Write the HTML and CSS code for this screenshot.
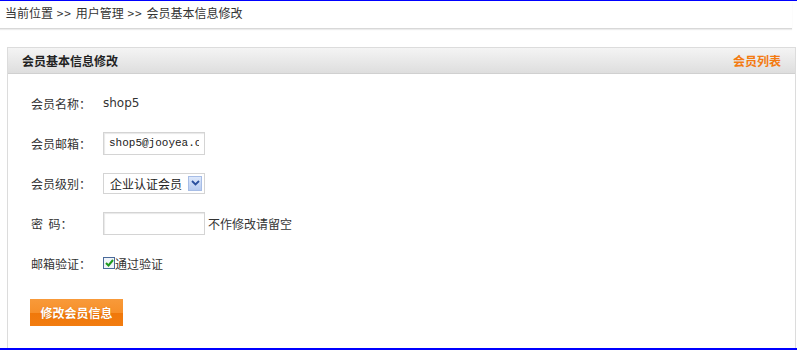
FILE: index.html
```html
<!DOCTYPE html>
<html lang="zh-CN">
<head>
    <meta charset="UTF-8">
    <title>会员基本信息修改</title>
    <link rel="stylesheet" href="styles.css">
</head>
<body>
    <div class="crumbs">当前位置 <span class="sep">&gt;&gt;</span> 用户管理 <span class="sep">&gt;&gt;</span> 会员基本信息修改</div>

    <div class="panel">
        <div class="panel-head">
            <span class="panel-title">会员基本信息修改</span>
            <a class="panel-link" href="#">会员列表</a>
        </div>
        <div class="form">
            <div class="row">
                <span class="label">会员名称：</span>
                <span class="value">shop5</span>
            </div>
            <div class="row">
                <span class="label">会员邮箱：</span>
                <input class="text mono" type="text" value="shop5@jooyea.com">
            </div>
            <div class="row">
                <span class="label">会员级别：</span>
                <div class="select">
                    <span class="select-text">企业认证会员</span>
                    <span class="select-arrow">
                        <svg width="9" height="6" viewBox="0 0 9 6"><path d="M1 1 L4.5 4.5 L8 1" fill="none" stroke="#2a4f9e" stroke-width="1.8"/></svg>
                    </span>
                </div>
            </div>
            <div class="row">
                <span class="label">密&nbsp;&nbsp;码：</span>
                <input class="text" type="password">
                <span class="hint">不作修改请留空</span>
            </div>
            <div class="row">
                <span class="label">邮箱验证：</span>
                <span class="check">
                    <svg width="9" height="8" viewBox="0 0 9 8"><path d="M1 4 L3.5 6.5 L8 1" fill="none" stroke="#1e9a1e" stroke-width="2"/></svg>
                </span>
                <span class="check-text">通过验证</span>
            </div>
            <button class="submit">修改会员信息</button>
        </div>
    </div>
</body>
</html>
```

FILE: styles.css
```css
body {
    margin: 0;
    height: 350px;
    box-sizing: border-box;
    border-top: 1px solid #0000ff;
    border-bottom: 2px solid #0000ff;
    font-family: "Noto Sans CJK SC", "Noto Sans", sans-serif;
    font-size: 12px;
    color: #333;
    background: #fff;
    overflow: hidden;
}
.crumbs {
    height: 27px;
    line-height: 24px;
    padding-left: 5px;
    margin-right: 5px;
    border-bottom: 1px solid #d8d8d8;
    box-shadow: 0 1px 1px #ececec;
    color: #333;
}
.sep {
    margin: 0 1px;
    letter-spacing: 1px;
}
.panel {
    margin: 18px 1px 0 7px;
    height: 300px;
    border: 1px solid #dcdcdc;
    border-bottom: none;
}
.panel-head {
    height: 25px;
    display: flex;
    align-items: center;
    justify-content: space-between;
    padding: 0 14px 0 14px;
    background: linear-gradient(to bottom, #f4f4f4, #dedede);
    border-bottom: 1px solid #d0d0d0;
}
.panel-title {
    font-weight: bold;
    color: #222;
}
.panel-link {
    font-weight: bold;
    color: #f37a10;
    text-decoration: none;
}
.form {
    padding: 9px 0 0 23px;
}
.row {
    height: 40px;
    display: flex;
    align-items: center;
}
.label {
    width: 72px;
    color: #333;
}
.value {
    font-family: "DejaVu Sans", sans-serif;
    font-size: 12px;
    color: #333;
}
.text {
    box-sizing: border-box;
    width: 102px;
    height: 23px;
    margin: 0;
    padding: 0 5px;
    border: 1px solid #d4d4d4;
    box-shadow: inset 1px 1px 1px #e8e8e8;
    font-size: 12px;
    color: #222;
    outline: none;
}
.mono {
    font-family: "Liberation Mono", "DejaVu Sans Mono", monospace;
    font-size: 11px;
}
.select {
    box-sizing: border-box;
    width: 102px;
    height: 21px;
    display: flex;
    align-items: center;
    justify-content: space-between;
    border: 1px solid #d4d4d4;
    padding: 0 2px 0 6px;
}
.select-text {
    color: #222;
}
.select-arrow {
    width: 14px;
    height: 15px;
    display: flex;
    align-items: center;
    justify-content: center;
    background: linear-gradient(to bottom, #dde8fb, #b7cbf0);
    border: 1px solid #a7bde6;
    box-sizing: border-box;
}
.hint {
    margin-left: 3px;
    color: #333;
}
.check {
    box-sizing: border-box;
    width: 12px;
    height: 12px;
    display: flex;
    align-items: center;
    justify-content: center;
    border: 1px solid #4a6a9a;
    background: #f0f4fa;
}
.check-text {
    color: #333;
}
.submit {
    margin: 16px 0 0 -1px;
    width: 93px;
    height: 27px;
    border: none;
    border-radius: 0;
    background: linear-gradient(to bottom, #f89a3a 0%, #f7902a 50%, #f0780a 51%, #f27c10 100%);
    color: #fff;
    font-family: "Noto Sans CJK SC", sans-serif;
    font-size: 12px;
    font-weight: bold;
    text-shadow: 0 0 1px #d06000;
    cursor: pointer;
}
```
